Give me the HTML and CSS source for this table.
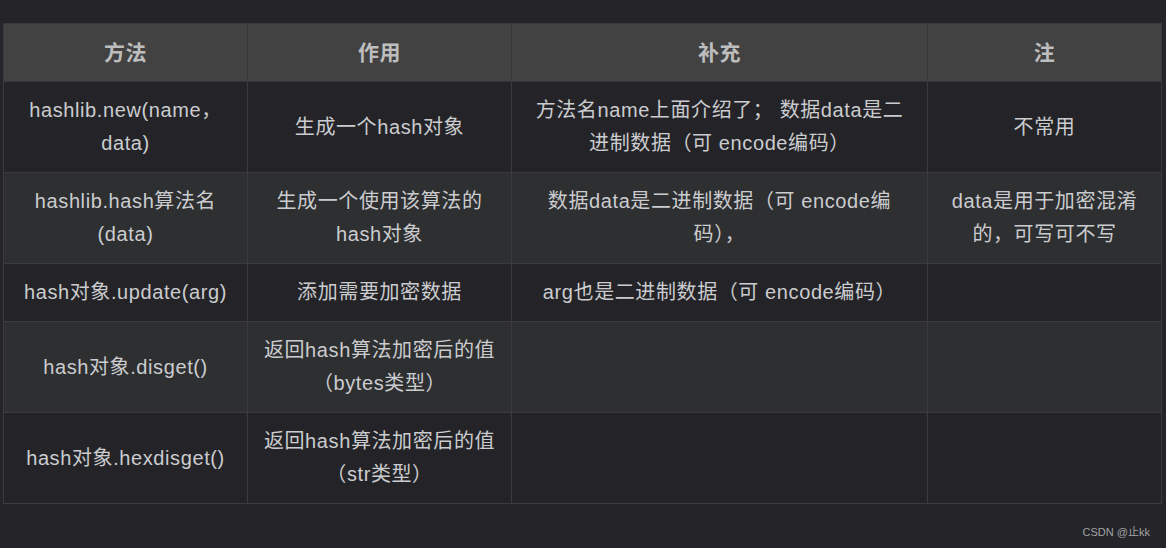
FILE: index.html
```html
<!DOCTYPE html>
<html lang="zh-CN">
<head>
<meta charset="utf-8">
<title>hashlib</title>
<link rel="stylesheet" href="styles.css">
</head>
<body>
<main class="page">
  <table class="grid">
    <colgroup>
      <col class="c1"><col class="c2"><col class="c3"><col class="c4">
    </colgroup>
    <thead>
      <tr><th>方法</th><th>作用</th><th>补充</th><th>注</th></tr>
    </thead>
    <tbody>
      <tr>
        <td>hashlib.new(name，data)</td>
        <td>生成一个hash对象</td>
        <td>方法名name上面介绍了； 数据data是二进制数据（可 encode编码）</td>
        <td>不常用</td>
      </tr>
      <tr>
        <td>hashlib.hash算法名(data)</td>
        <td>生成一个使用该算法的hash对象</td>
        <td>数据data是二进制数据（可 encode编码），</td>
        <td>data是用于加密混淆的，可写可不写</td>
      </tr>
      <tr>
        <td>hash对象.update(arg)</td>
        <td>添加需要加密数据</td>
        <td>arg也是二进制数据（可 encode编码）</td>
        <td></td>
      </tr>
      <tr>
        <td>hash对象.disget()</td>
        <td>返回hash算法加密后的值（bytes类型）</td>
        <td></td>
        <td></td>
      </tr>
      <tr>
        <td>hash对象.hexdisget()</td>
        <td>返回hash算法加密后的值（str类型）</td>
        <td></td>
        <td></td>
      </tr>
    </tbody>
  </table>
  <footer class="mark">CSDN @止kk</footer>
</main>
</body>
</html>
```
FILE: styles.css
```css
html, body {
  margin: 0;
  padding: 0;
  background: #242429;
}
body {
  font-family: "Liberation Sans", Arial, "Noto Sans CJK SC", sans-serif;
  color: #cbcccf;
}
.page {
  width: 1166px;
  height: 548px;
  box-sizing: border-box;
  padding: 23px 5px 0 3px;
  display: flex;
  flex-direction: column;
}
.grid {
  width: 1158px;
  border-collapse: collapse;
  table-layout: fixed;
  font-size: 20px;
  line-height: 33px;
  letter-spacing: 0.6px;
}
.c1 { width: 244px; }
.c2 { width: 264px; }
.c3 { width: 416px; }
.c4 { width: 234px; }
.grid th, .grid td {
  border: 1px solid #3b3b3e;
  padding: 12px 18px;
  text-align: center;
  vertical-align: middle;
}
.grid td:nth-child(2) {
  padding-left: 12px;
  padding-right: 12px;
}
.grid th {
  background: #424242;
  color: #bdbdbd;
  font-weight: bold;
  font-size: 21px;
  border-color: #393939;
}
.grid tbody tr:nth-child(odd) td { background: #242428; }
.grid tbody tr:nth-child(even) td { background: #2e2f31; }
.mark {
  margin-top: 21px;
  align-self: flex-end;
  margin-right: 11px;
  font-size: 11px;
  line-height: 14px;
  color: #a3a3a3;
}
```
